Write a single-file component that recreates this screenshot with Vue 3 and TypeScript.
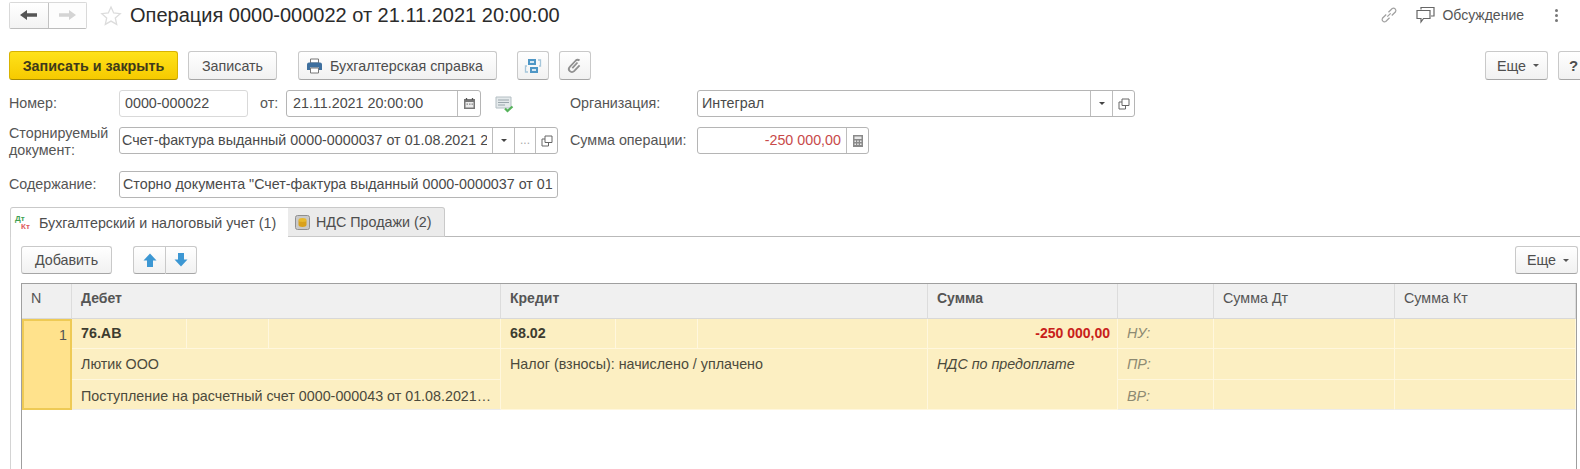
<script setup lang="ts">
const columns: { title: string; bold: boolean }[] = [
  { title: 'N', bold: false },
  { title: 'Дебет', bold: true },
  { title: 'Кредит', bold: true },
  { title: 'Сумма', bold: true },
  { title: '', bold: false },
  { title: 'Сумма Дт', bold: false },
  { title: 'Сумма Кт', bold: false },
]
</script>

<template>
  <div class="page">
    <header class="top">
      <div class="nav">
        <button class="nav-btn">
          <svg width="20" height="14" viewBox="0 0 20 14"><path d="M1 7l7-5v3.200h10v3.600H8V12z" fill="#555" /></svg>
        </button>
        <button class="nav-btn nav-off">
          <svg width="20" height="14" viewBox="0 0 20 14"><path d="M19 7l-7-5v3.200H2v3.600h10V12z" fill="#d4d4d4" /></svg>
        </button>
      </div>
      <svg class="star" width="22" height="22" viewBox="0 0 22 22"><path d="M11 2l2.700 6 6.500.7-4.900 4.300 1.400 6.400L11 16.100l-5.700 3.300 1.400-6.400L1.800 8.700 8.300 8z" fill="#fff" stroke="#dcdcdc" stroke-width="1.300" /></svg>
      <h1 class="title">Операция 0000-000022 от 21.11.2021 20:00:00</h1>
      <div class="top-right">
        <svg class="link" width="20" height="20" viewBox="0 0 18 18" fill="none" stroke="#a0a0a0" stroke-width="1.100"><path d="M7.500 10.500l3-3M6.500 8.500l-3.400 3.400a2.200 2.200 0 0 0 3 3l3.400-3.400M11.500 9.500l3.400-3.400a2.200 2.200 0 0 0-3-3L8.500 6.500" /></svg>
        <svg class="chat" width="19" height="18" viewBox="0 0 19 18" fill="none" stroke="#666" stroke-width="1.200"><path d="M5 3.500V1.500h13v8.500h-3" /><path d="M1 4.500h13v8H7.500L5 16v-3.500H1z" fill="#fff" /></svg>
        <span class="discuss">Обсуждение</span>
        <span class="kebab"><i></i><i></i><i></i></span>
      </div>
    </header>

    <div class="command">
      <button class="btn primary">Записать и закрыть</button>
      <button class="btn save">Записать</button>
      <button class="btn report">
        <svg width="17" height="16" viewBox="0 0 17 16"><path d="M4.500 1h8v4h-8z" fill="#fff" stroke="#777" /><path d="M1 6.500a2 2 0 0 1 2-2h11a2 2 0 0 1 2 2V12h-3V9.500H4V12H1z" fill="#3e6f9e" /><path d="M4.500 10h8v5h-8z" fill="#fff" stroke="#777" /></svg>
        Бухгалтерская справка
      </button>
      <button class="btn icon-btn structure">
        <svg width="18" height="18" viewBox="0 0 18 18"><path d="M4 2h8v6H4zM6 10h8v6H6z" fill="#4f97c6" /><path d="M6 4h4v2H6zM8 12h4v2H8z" fill="#d6e7f2" /><path d="M14 3h2.500v6H15M4 15H1.500V9H3" fill="none" stroke="#a5c6da" stroke-width="1.300" /></svg>
      </button>
      <button class="btn icon-btn clip">
        <svg width="18" height="18" viewBox="0 0 18 18" fill="none" stroke="#909090" stroke-width="1.800"><path d="M13.500 3.500a2.600 2.600 0 0 0-3.700 0l-6 6.400a3 3 0 0 0 4.300 4.300l5.500-5.800" /><path d="M11.500 5.500l-5.200 5.600" /></svg>
      </button>
      <button class="btn more">Еще <b class="caret"></b></button>
      <button class="btn help">?</button>
    </div>

    <div class="form-row row-one">
      <label class="label">Номер:</label>
      <div class="field number soft"><span class="value">0000-000022</span></div>
      <label class="label from">от:</label>
      <div class="field date">
        <span class="value">21.11.2021 20:00:00</span>
        <span class="addon cal">
          <svg width="13" height="13" viewBox="0 0 13 13"><path d="M1 2h11v10H1z" fill="#777" /><path d="M2.500 5h8v5.500h-8z" fill="#ececec" /><path d="M3.500 1v2M9.500 1v2" stroke="#555" stroke-width="1.300" /><path d="M3.500 6.500H5v1.300H3.500zM6 6.500h1.500v1.300H6zM8.500 6.500H10v1.300H8.500z" fill="#888" /></svg>
        </span>
      </div>
      <svg class="posted" width="20" height="17" viewBox="0 0 20 17"><path d="M1 1h15v11H1z" fill="#e4e9eb" stroke="#b4bfc4" /><path d="M3 4h11M3 6.500h11M3 9h7" stroke="#9aa6ac" /><path d="M10 12.500l2.500 2.500 5-4.500" fill="none" stroke="#55b25a" stroke-width="2.200" /></svg>
      <label class="label org-label">Организация:</label>
      <div class="field org">
        <span class="value">Интеграл</span>
        <span class="addon drop"><b class="caret dark"></b></span>
        <span class="addon open">
          <svg width="12" height="12" viewBox="0 0 12 12" fill="none" stroke="#666"><path d="M4 1h7v6.500H4z" /><path d="M4 4H1v7h6.500V7.500" /></svg>
        </span>
      </div>
    </div>

    <div class="form-row row-two">
      <label class="label two-line">Сторнируемый документ:</label>
      <div class="field storno">
        <span class="value clip-text">Счет-фактура выданный 0000-0000037 от 01.08.2021 2</span>
        <span class="addon drop"><b class="caret dark"></b></span>
        <span class="addon dots">...</span>
        <span class="addon open">
          <svg width="12" height="12" viewBox="0 0 12 12" fill="none" stroke="#666"><path d="M4 1h7v6.500H4z" /><path d="M4 4H1v7h6.500V7.500" /></svg>
        </span>
      </div>
      <label class="label sum-label">Сумма операции:</label>
      <div class="field amount">
        <span class="value red">-250 000,00</span>
        <span class="addon calc">
          <svg width="12" height="14" viewBox="0 0 12 14"><path d="M1 1h10v12H1z" fill="#8a8a8a" /><path d="M2.500 2.500h7V5h-7z" fill="#e8e8e8" /><path d="M2.500 6.500H4V8H2.500zM5.200 6.500h1.500V8H5.200zM8 6.500h1.500V8H8zM2.500 9.500H4V11H2.500zM5.200 9.500h1.500V11H5.200zM8 9.500h1.500V11H8z" fill="#e8e8e8" /></svg>
        </span>
      </div>
    </div>

    <div class="form-row row-three">
      <label class="label">Содержание:</label>
      <div class="field content">
        <span class="value">Сторно документа "Счет-фактура выданный 0000-0000037 от 01</span>
      </div>
    </div>

    <div class="tabs">
      <div class="tab active">
        <span class="dtkt"><span class="dt">Дт</span><span class="kt">Кт</span></span>
        Бухгалтерский и налоговый учет (1)
      </div>
      <div class="tab">
        <svg width="15" height="15" viewBox="0 0 15 15"><rect x=".5" y=".5" width="14" height="14" rx="2" fill="#c9c9c9" stroke="#8f8f8f" /><ellipse cx="7.500" cy="5" rx="4" ry="2" fill="#e8b92c" /><path d="M3.500 5v5c0 1.100 1.800 2 4 2s4-.9 4-2V5c0 1.100-1.800 2-4 2s-4-.9-4-2z" fill="#d9a11c" /></svg>
        НДС Продажи (2)
      </div>
      <div class="tab-rest"></div>
    </div>

    <section class="panel">
      <div class="toolbar">
        <button class="btn add">Добавить</button>
        <div class="arrows">
          <button class="btn arrow">
            <svg width="16" height="16" viewBox="0 0 16 16"><path d="M8 1.500l6.500 7H11V15H5V8.500H1.500z" fill="#3c97d3" /></svg>
          </button>
          <button class="btn arrow">
            <svg width="16" height="16" viewBox="0 0 16 16"><path d="M8 14.500l6.500-7H11V1H5v6.500H1.500z" fill="#3c97d3" /></svg>
          </button>
        </div>
        <button class="btn more table-more">Еще <b class="caret"></b></button>
      </div>

      <div class="table">
        <div v-for="col in columns" :key="col.title" class="th" :class="{ strong: col.bold }">{{ col.title }}</div>

        <div class="num-cell">1</div>

        <div class="td account r1 strong">
          <span class="sub first">76.АВ</span><span class="sub"></span><span class="sub last"></span>
        </div>
        <div class="td account r1 strong">
          <span class="sub first">68.02</span><span class="sub"></span><span class="sub last"></span>
        </div>
        <div class="td r1 money">-250 000,00</div>
        <div class="td r1 tag">НУ:</div>
        <div class="td r1"></div>
        <div class="td r1"></div>

        <div class="td r2">Лютик ООО</div>
        <div class="td r2 merged">Налог (взносы): начислено / уплачено</div>
        <div class="td r2 merged italic">НДС по предоплате</div>
        <div class="td r2 tag">ПР:</div>
        <div class="td r2"></div>
        <div class="td r2"></div>

        <div class="td r3 ellipsis">Поступление на расчетный счет 0000-000043 от 01.08.2021 12:00:00</div>
        <div class="td r3 tag">ВР:</div>
        <div class="td r3"></div>
        <div class="td r3"></div>
      </div>
    </section>
  </div>
</template>

<style scoped>
.page {
  width: 1580px;
  height: 469px;
  overflow: hidden;
  box-sizing: border-box;
  background: #fff;
  font-family: "Liberation Sans", Arial, sans-serif;
  font-size: 14.300px;
  color: #4a4a4a;
}
button {
  font-family: inherit;
}
.top {
  height: 32px;
  padding-left: 9px;
  display: flex;
  align-items: center;
}
.nav {
  display: flex;
  width: 78px;
  height: 27px;
  box-sizing: border-box;
  margin-top: -2px;
  border: 1px solid #d9d9d9;
  border-bottom-color: #bdbdbd;
  border-radius: 2px;
}
.nav-btn {
  flex: 1;
  padding: 0;
  display: flex;
  align-items: center;
  justify-content: center;
  border: 0;
  border-right: 1px solid #c2c2c2;
  background: linear-gradient(#fff, #f3f3f3);
}
.nav-off {
  border-right: 0;
  background: #fdfdfd;
}
.star {
  margin-left: 13px;
}
.title {
  margin: 0 0 2px 8px;
  font-size: 20px;
  font-weight: 400;
  color: #2b2b2b;
  white-space: nowrap;
}
.top-right {
  margin-left: auto;
  display: flex;
  align-items: center;
  padding-right: 22px;
  margin-top: -2px;
  font-size: 14px;
}
.chat {
  margin-left: 17px;
}
.discuss {
  margin-left: 7px;
  color: #555;
}
.kebab {
  margin-left: 31px;
  display: flex;
  flex-direction: column;
  gap: 2px;
}
.kebab i {
  width: 3px;
  height: 3px;
  background: #777;
  border-radius: 50%;
}
.command {
  margin-top: 19px;
  padding-left: 9px;
  height: 29px;
  display: flex;
}
.btn {
  box-sizing: border-box;
  height: 100%;
  padding: 0;
  display: flex;
  align-items: center;
  justify-content: center;
  border: 1px solid #c9c9c9;
  border-bottom-color: #a6a6a6;
  border-radius: 3px;
  background: linear-gradient(#fff, #f1f1f1);
  font-size: 14.300px;
  color: #4e4e4e;
}
.primary {
  width: 169px;
  border-color: #d8b300;
  border-bottom-color: #a88c00;
  background: linear-gradient(#ffe21a, #f6ca00);
  font-weight: 700;
  color: #3e3a1a;
}
.save {
  width: 89px;
  margin-left: 10px;
}
.report {
  width: 199px;
  margin-left: 21px;
  padding-right: 6px;
  gap: 7px;
}
.icon-btn {
  width: 32px;
}
.structure {
  margin-left: 20px;
}
.clip {
  margin-left: 10px;
}
.more {
  width: 63px;
  padding-left: 3px;
  gap: 7px;
}
.command .more {
  margin-left: auto;
}
.help {
  width: 30px;
  margin-left: 10px;
  margin-right: -8px;
  font-weight: 700;
  font-size: 15px;
  justify-content: flex-start;
  padding-left: 10px;
}
.caret {
  width: 0;
  height: 0;
  border: 3px solid transparent;
  border-top: 3px solid #555;
  border-bottom: 0;
}
.form-row {
  display: flex;
  padding-left: 9px;
}
.row-one {
  margin-top: 10px;
  height: 27px;
  align-items: center;
}
.row-two {
  margin-top: 10px;
  height: 27px;
  align-items: center;
}
.row-three {
  margin-top: 17px;
  height: 27px;
  align-items: center;
}
.label {
  width: 110px;
  margin-bottom: 2px;
  color: #555;
  flex: none;
}
.two-line {
  line-height: 17px;
  height: 34px;
  margin-top: 3px;
  margin-bottom: 0;
}
.from {
  width: 26px;
  margin-left: 12px;
}
.field {
  box-sizing: border-box;
  height: 27px;
  display: flex;
  align-items: stretch;
  border: 1px solid #b5b5b5;
  border-radius: 3px;
  background: #fff;
  flex: none;
}
.soft {
  border-color: #d9d9d9;
}
.value {
  flex: 1;
  min-width: 0;
  padding-left: 5px;
  line-height: 25px;
  white-space: nowrap;
}
.clip-text {
  overflow: hidden;
}
.date .value {
  padding-left: 6px;
}
.storno .value {
  padding-left: 2px;
  margin-right: 5px;
}
.content .value {
  padding-left: 3px;
  overflow: hidden;
}
.red {
  text-align: right;
  padding-right: 5px;
  color: #c84a4a;
}
.addon {
  flex: none;
  display: flex;
  align-items: center;
  justify-content: center;
  border-left: 1px solid #bdbdbd;
}
.number {
  width: 129px;
}
.date {
  width: 195px;
}
.cal {
  width: 22px;
}
.posted {
  margin-left: 14px;
  margin-top: 2px;
}
.org-label {
  margin-left: 55px;
  width: 127px;
}
.org {
  width: 438px;
}
.org .value {
  padding-left: 4px;
}
.drop {
  width: 21px;
}
.dark {
  border-top-color: #444;
}
.open {
  width: 21px;
}
.dots {
  width: 21px;
  color: #aaa;
  font-size: 12px;
  padding-bottom: 2px;
  box-sizing: border-box;
}
.storno {
  width: 439px;
}
.sum-label {
  margin-left: 12px;
  width: 127px;
}
.amount {
  width: 172px;
}
.calc {
  width: 21px;
}
.content {
  width: 439px;
}
.tabs {
  margin-top: 9px;
  height: 30px;
  padding-left: 10px;
  display: flex;
}
.tab {
  box-sizing: border-box;
  display: flex;
  align-items: center;
  gap: 6px;
  padding-left: 7px;
  width: 157px;
  background: #ebebeb;
  border: 1px solid #c9c9c9;
  border-left: 0;
  border-radius: 0 3px 0 0;
  color: #4e4e4e;
}
.active {
  width: 278px;
  background: #fff;
  border-left: 1px solid #d0d0d0;
  border-right: 0;
  border-bottom: 0;
  border-radius: 3px 0 0 0;
  padding-left: 4px;
  gap: 8px;
}
.tab-rest {
  flex: 1;
  border-bottom: 1px solid #b9b9b9;
}
.dtkt {
  display: flex;
  flex-direction: column;
  width: 16px;
  font-size: 8px;
  font-weight: 700;
  line-height: 8px;
}
.dt {
  color: #3f9f52;
}
.kt {
  color: #dd5a5a;
  padding-left: 6px;
}
.panel {
  margin-left: 10px;
  padding: 9px 3px 0 10px;
  border-left: 1px solid #d4d4d4;
}
.toolbar {
  display: flex;
  height: 28px;
}
.add {
  width: 91px;
}
.arrows {
  display: flex;
  margin-left: 21px;
  height: 28px;
}
.arrow {
  width: 32px;
  border-radius: 0 3px 3px 0;
}
.arrow:first-child {
  border-right: 0;
  border-radius: 3px 0 0 3px;
}
.table-more {
  margin-left: auto;
  margin-right: -1px;
}
.table {
  margin-top: 9px;
  display: grid;
  grid-template-columns: 50px 429px 427px 190px 96px 181px 1fr;
  grid-template-rows: 35px 30px 31px 30px 70px;
  border: 1px solid #9f9f9f;
  border-bottom: 0;
}
.th {
  padding-left: 9px;
  line-height: 29px;
  background: #f0f0f0;
  border-right: 1px solid #dcdcdc;
  border-bottom: 1px solid #d8d8d8;
  color: #555;
  font-size: 14.300px;
}
.th.strong {
  font-size: 14px;
  font-weight: 700;
}
.strong {
  font-weight: 700;
}
.num-cell {
  grid-row: 2 / span 3;
  grid-column: 1;
  box-sizing: border-box;
  border: 2px solid #eeca55;
  background: #ffe28c;
  padding: 3px 3px 0 0;
  text-align: right;
  line-height: 22px;
  color: #555;
}
.td {
  box-sizing: border-box;
  padding-left: 9px;
  background: #fcefc2;
  border-right: 1px solid #fff7dd;
  border-bottom: 1px solid #fff7dd;
  font-size: 14.300px;
  line-height: 30px;
  color: #4b4a3c;
  white-space: nowrap;
  overflow: hidden;
}
.account {
  padding: 0;
  display: flex;
  color: #3d3c30;
  line-height: 28px;
}
.sub {
  flex: none;
  width: 81px;
  border-right: 1px solid #fff7dd;
}
.first {
  width: 115px;
  padding-left: 9px;
  box-sizing: border-box;
}
.last {
  flex: 1;
  border-right: 0;
}
.money {
  padding: 0 7px 0 0;
  text-align: right;
  font-size: 14px;
  font-weight: 700;
  line-height: 28px;
  color: #c8201a;
}
.r1.tag {
  line-height: 28px;
}
.tag,
.italic {
  font-style: italic;
  color: #8d8a72;
}
.italic {
  color: #4b4a3c;
}
.merged {
  grid-row: span 2;
}
.ellipsis {
  grid-column: 2;
  padding-right: 8px;
  text-overflow: ellipsis;
  line-height: 32px;
}
.r3.tag {
  grid-column: 5;
  line-height: 32px;
}
.r3 {
  border-bottom-color: #ececec;
}
</style>
